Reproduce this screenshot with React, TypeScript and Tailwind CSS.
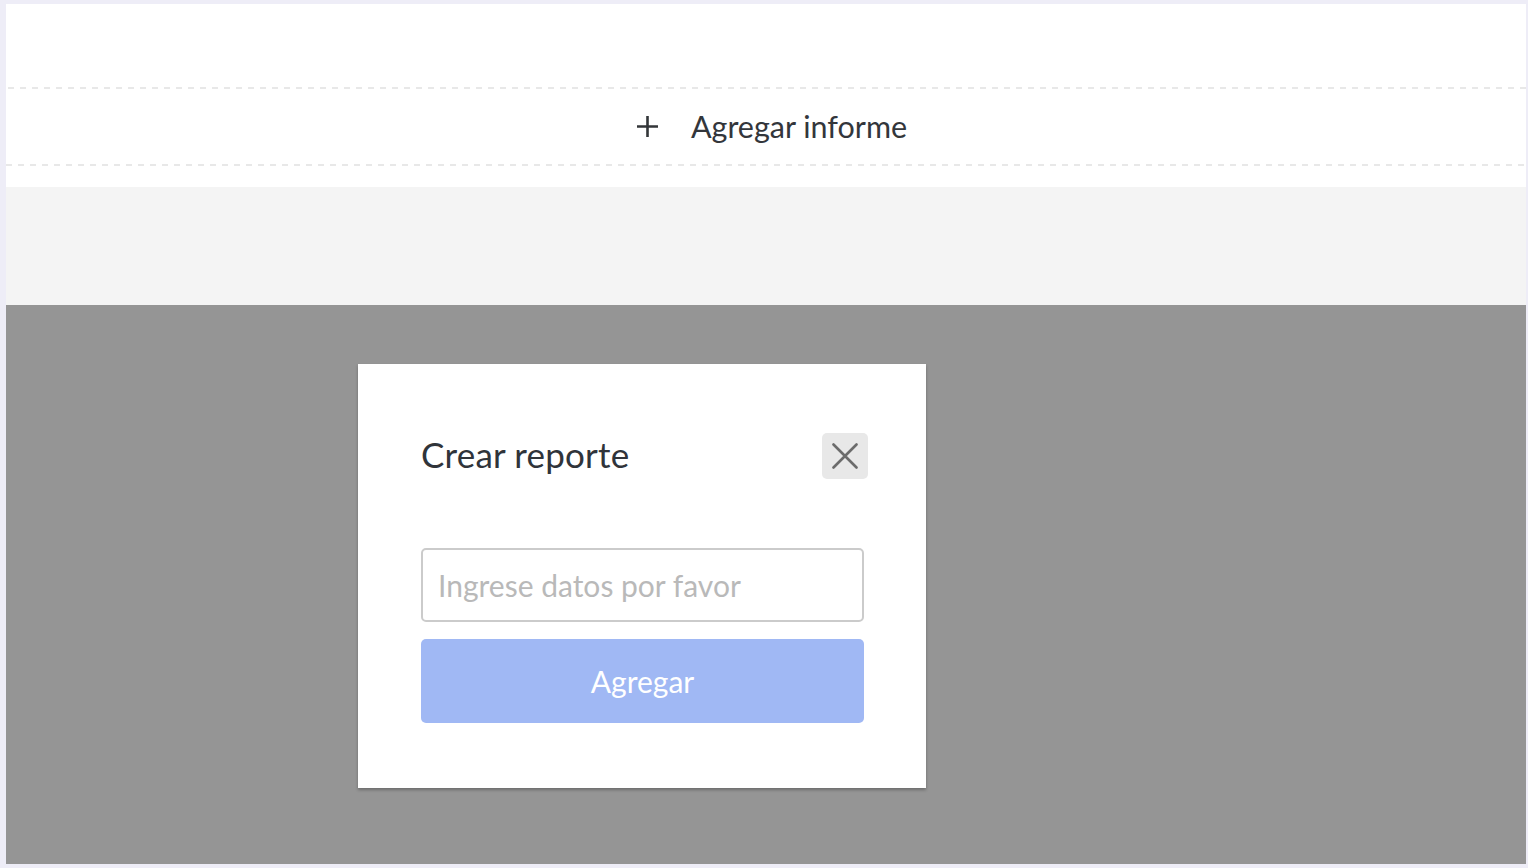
import { useState } from "react";

const font = { fontFamily: '"Lato", "Noto Sans", sans-serif' };

const PlusIcon = () => (
    <svg width="21" height="21" viewBox="0 0 21 21" className="shrink-0">
        <path d="M10.5 0v21M0 10.5h21" stroke="#333639" strokeWidth="2.6" />
    </svg>
);

const CloseIcon = () => (
    <svg width="26" height="26" viewBox="0 0 26 26">
        <path d="M1.5 1.5l23 23M24.5 1.5l-23 23" stroke="#6b6b6b" strokeWidth="2.6" strokeLinecap="round" />
    </svg>
);

const DashedLine = ({ className = "" }: { className?: string }) => (
    <div className={`h-[2px] bg-[repeating-linear-gradient(90deg,#e8e8e8_0_6px,transparent_6px_12px)] ${className}`} />
);

const CreateReportModal = () => {
    const [value, setValue] = useState("");

    return (
        <div className="w-[568px] h-[424px] bg-white px-[63px] pt-[69px] shadow-[0_2px_3px_rgba(0,0,0,0.28)]">
            <div className="w-[443px] flex flex-col">
                <div className="flex items-center justify-between h-[46px]">
                    <h2 className="text-[35px] leading-none text-[#30343a] tracking-[0.2px] -mt-[4px]">Crear reporte</h2>
                    <button className="w-[46px] h-[46px] -mr-[4px] rounded-[5px] bg-[#e8e8e8] flex items-center justify-center">
                        <CloseIcon />
                    </button>
                </div>
                <input
                    value={value}
                    onChange={(e) => setValue(e.target.value)}
                    placeholder="Ingrese datos por favor"
                    className="mt-[69px] h-[74px] w-full rounded-[5px] border-[2px] border-[#cbcbcb] px-[15px] text-[30px] text-[#333] placeholder:text-[#b9b9b9] outline-none"
                    style={font}
                />
                <button className="mt-[17px] h-[84px] w-full rounded-[5px] bg-[#a0b8f4] text-[30px] text-white" style={font}>
                    Agregar
                </button>
            </div>
        </div>
    );
};

export default function App() {
    return (
        <div className="h-screen w-full bg-[#eeedf7] pt-[4px] pl-[6px] pr-[2px] pb-[4px] flex flex-col" style={font}>
            <section className="h-[183px] bg-white flex flex-col">
                <div className="h-[83px]" />
                <DashedLine className="ml-[2px]" />
                <div className="h-[75px] flex items-center justify-center gap-[33px] pl-[12px]">
                    <PlusIcon />
                    <span className="text-[30.5px] text-[#33363b]">Agregar informe</span>
                </div>
                <DashedLine />
            </section>
            <section className="h-[118px] bg-[#f4f4f4]" />
            <section className="flex-1 bg-[#959595] pl-[352px] pt-[59px]">
                <CreateReportModal />
            </section>
        </div>
    );
}
